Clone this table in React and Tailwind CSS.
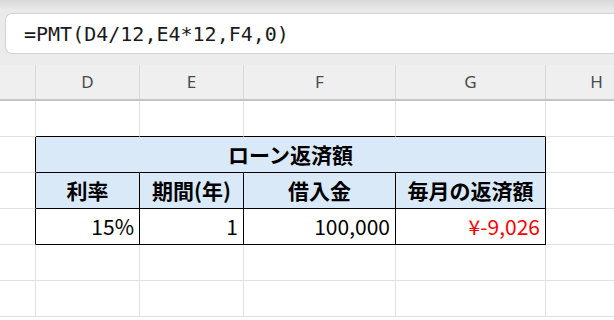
import React from "react";

const cols = [
  { key: "C", w: 36 },
  { key: "D", w: 104 },
  { key: "E", w: 104 },
  { key: "F", w: 152 },
  { key: "G", w: 150 },
  { key: "H", w: 102 },
];

const jp = { fontFamily: '"Noto Sans CJK JP", "Noto Sans", sans-serif' };

// one grid cell; border colours decide whether it is part of the boxed table
function Cell({ w, right = "gray", bottom = "gray", className = "", children }) {
  const r = right === "black" ? "border-r-black" : "border-r-[#e1e1e1]";
  const b = bottom === "black" ? "border-b-black" : "border-b-[#e1e1e1]";
  return (
    <div
      style={{ width: w }}
      className={`h-9 shrink-0 border-r border-b ${r} ${b} flex items-center ${className}`}
    >
      {children}
    </div>
  );
}

function BlankRow({ topOfTable }) {
  return (
    <div className="flex">
      {cols.map((c) => (
        <Cell
          key={c.key}
          w={c.w}
          bottom={topOfTable && c.key !== "C" && c.key !== "H" ? "black" : "gray"}
        />
      ))}
    </div>
  );
}

export default function App() {
  const headers = ["利率", "期間(年)", "借入金", "毎月の返済額"];
  const values = [
    { v: "15%", red: false },
    { v: "1", red: false },
    { v: "100,000", red: false },
    { v: "¥-9,026", red: true },
  ];

  return (
    <div className="w-[614px] h-[320px] overflow-hidden bg-white">
      {/* formula bar */}
      <div className="h-[65px] bg-gradient-to-b from-[#d8d8d8] via-[#eaeaea] via-[15%] to-[#ececec] pt-[13px] pl-[5px]">
        <div className="h-[41px] bg-white border border-r-0 border-[#d2d2d2] rounded-l-[7px] flex items-center pl-[18px]">
          <span
            className="text-[20px] text-[#1a1a1a]"
            style={{ fontFamily: '"DejaVu Sans Mono", "Liberation Mono", monospace' }}
          >
            =PMT(D4/12,E4*12,F4,0)
          </span>
        </div>
      </div>

      {/* column letters */}
      <div className="flex h-9 bg-[#efefef] border-b-2 border-[#c4c4c4]">
        {cols.map((c) => (
          <div
            key={c.key}
            style={{ width: c.w }}
            className="shrink-0 border-r border-[#d9d9d9] flex items-center justify-center text-[17px] text-[#4a4a4a]"
          >
            <span style={{ fontFamily: '"Noto Sans", sans-serif' }}>
              {c.key === "C" ? "" : c.key}
            </span>
          </div>
        ))}
      </div>

      <BlankRow topOfTable />

      {/* title row, merged D:G */}
      <div className="flex" style={jp}>
        <Cell w={36} right="black" />
        <Cell w={510} right="black" bottom="black" className="justify-center bg-[#dae9f8]">
          <span className="text-[21px] font-bold text-black">ローン返済額</span>
        </Cell>
        <Cell w={102} />
      </div>

      {/* header row */}
      <div className="flex" style={jp}>
        <Cell w={36} right="black" />
        {headers.map((h, i) => (
          <Cell
            key={h}
            w={cols[i + 1].w}
            right="black"
            bottom="black"
            className="justify-center bg-[#dae9f8]"
          >
            <span className="text-[21px] font-bold text-black">{h}</span>
          </Cell>
        ))}
        <Cell w={102} />
      </div>

      {/* values */}
      <div className="flex" style={jp}>
        <Cell w={36} right="black" />
        {values.map((d, i) => (
          <Cell
            key={i}
            w={cols[i + 1].w}
            right="black"
            bottom="black"
            className="justify-end pr-[5px]"
          >
            <span className={`text-[21px] ${d.red ? "text-[#ff0000]" : "text-black"}`}>
              {d.v}
            </span>
          </Cell>
        ))}
        <Cell w={102} />
      </div>

      <BlankRow />
      <BlankRow />
    </div>
  );
}
